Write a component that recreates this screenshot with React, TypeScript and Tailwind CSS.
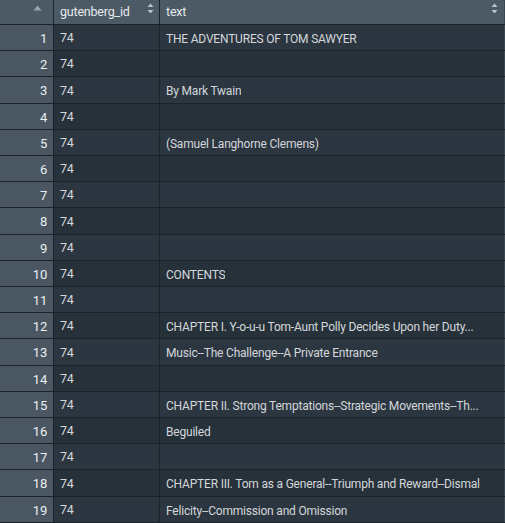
import React from "react";

const rows: string[] = [
  "THE ADVENTURES OF TOM SAWYER",
  "",
  "By Mark Twain",
  "",
  "(Samuel Langhorne Clemens)",
  "",
  "",
  "",
  "",
  "CONTENTS",
  "",
  "CHAPTER I. Y-o-u-u Tom-Aunt Polly Decides Upon her Duty...",
  "Music--The Challenge--A Private Entrance",
  "",
  "CHAPTER II. Strong Temptations--Strategic Movements--Th...",
  "Beguiled",
  "",
  "CHAPTER III. Tom as a General--Triumph and Reward--Dismal",
  "Felicity--Commission and Omission",
];

// row heights so the 19 rows fill the window
const tall = [2, 7, 12, 17];

const SortBoth = () => (
  <svg width="7" height="11" viewBox="0 0 7 11" className="shrink-0">
    <path d="M3.5 0.5 L6.5 4 L0.5 4 Z" fill="#b9c2ca" />
    <path d="M3.5 10.5 L6.5 7 L0.5 7 Z" fill="#b9c2ca" />
  </svg>
);

const SortUp = () => (
  <svg width="9" height="6" viewBox="0 0 9 6" className="shrink-0">
    <path d="M4.5 0.5 L8.5 5.5 L0.5 5.5 Z" fill="#9aa4ad" />
  </svg>
);

export default function App() {
  return (
    <div
      className="w-[505px] h-[523px] overflow-hidden bg-[#27313a] text-[12px] tracking-[-0.2px] text-[#d3d7db]"
      style={{ fontFamily: 'Roboto, "Noto Sans", sans-serif' }}
    >
      {/* Header */}
      <div className="flex h-[25px] bg-[#4c5a66] border-b border-[#1b232a]">
        <div className="w-[54px] flex justify-end items-start pt-[5px] pr-[11px] border-r border-[#1b232a]">
          <SortUp />
        </div>
        <div className="w-[106px] flex items-center justify-between pl-[6px] pr-[5px] border-r border-[#1b232a] text-[12.5px] text-[#e6e9ec]">
          <span className="mt-[1px]">gutenberg_id</span>
          <span className="-mt-[8px]">
            <SortBoth />
          </span>
        </div>
        <div className="flex-1 flex items-center justify-between pl-[6px] pr-[6px] border-r border-[#3a4650] text-[12.5px] text-[#e6e9ec]">
          <span className="mt-[1px]">text</span>
          <span className="-mt-[8px]">
            <SortBoth />
          </span>
        </div>
      </div>

      {/* Body */}
      {rows.map((text, i) => (
        <div
          key={i}
          className={`flex border-b border-[#1b232a] ${
            tall.includes(i) ? "h-[27px]" : "h-[26px]"
          } ${i % 2 === 0 ? "bg-[#2c3640]" : "bg-[#27313a]"}`}
        >
          <div className="w-[54px] flex items-center justify-end pr-[6px] pt-[2px] bg-[#4a5763] border-r border-[#1b232a] text-[13px] text-[#eceef0]">
            {i + 1}
          </div>
          <div className="w-[106px] flex items-center pl-[6px] pt-[2px] border-r border-[#1b232a] text-[12.5px]">
            74
          </div>
          <div className="flex-1 min-w-0 flex items-center pl-[6px] pr-[4px] pt-[2px] border-r border-[#3a4650]">
            <span className="truncate">{text}</span>
          </div>
        </div>
      ))}
    </div>
  );
}
